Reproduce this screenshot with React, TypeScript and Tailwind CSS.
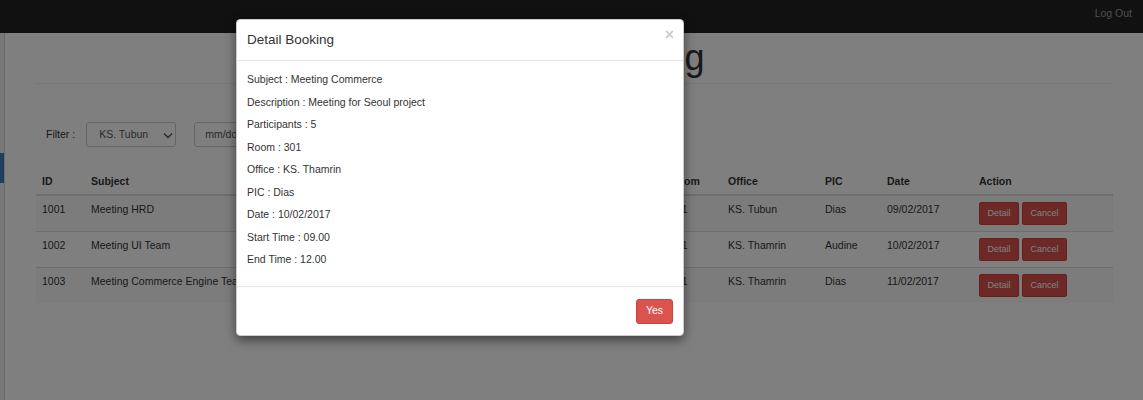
import React from "react";

const rows = [
  { id: "1001", subject: "Meeting HRD", room: "301", office: "KS. Tubun", pic: "Dias", date: "09/02/2017" },
  { id: "1002", subject: "Meeting UI Team", room: "201", office: "KS. Thamrin", pic: "Audine", date: "10/02/2017" },
  { id: "1003", subject: "Meeting Commerce Engine Team", room: "101", office: "KS. Thamrin", pic: "Dias", date: "11/02/2017" },
];

const details = [
  "Subject : Meeting Commerce",
  "Description : Meeting for Seoul project",
  "Participants : 5",
  "Room : 301",
  "Office : KS. Thamrin",
  "PIC : Dias",
  "Date : 10/02/2017",
  "Start Time : 09.00",
  "End Time : 12.00",
];

const cols = "grid grid-cols-[49px_579px_58px_97px_62px_92px_140px]";

export default function App() {
  return (
    <div className="relative w-[1143px] h-[400px] overflow-hidden bg-white text-[#333] text-[10.5px] font-['Liberation_Sans',Arial,sans-serif]">
      {/* navbar */}
      <div className="h-[33px] bg-[#222] flex justify-end">
        <span className="text-[#9d9d9d] pr-[11px] pt-[6px] leading-[15px]">Log Out</span>
      </div>

      <div className="flex h-[367px]">
        {/* sidebar */}
        <div className="w-[5px] bg-[#f0f0f0] border-r border-[#d5d5d5] flex flex-col">
          <div className="h-[120px]" />
          <div className="h-[30px] w-[4px] bg-[#3f7dba]" />
        </div>

        {/* main */}
        <div className="flex-1 pl-[31px] pr-[30px]">
          <div className="mt-[4.5px] pb-[5.5px] border-b border-[#eee]">
            <h1 className="text-[36px] leading-[40px] text-center font-normal pr-[8px]">Meeting Booking</h1>
          </div>

          <div className="mt-[38px] h-[25px] flex items-center">
            <span className="pl-[10px] leading-[15px]">Filter :</span>
            <div className="ml-[11px] w-[90px] h-[25px] border border-[#ccc] rounded-[3px] flex items-center pl-[12px] pr-[3px] relative">
              <span className="text-[10.5px] text-[#555]">KS. Tubun</span>
              <svg className="absolute left-[76px] top-[9px]" width="10" height="7" viewBox="0 0 10 7">
                <path d="M1 1.5 L5 5.5 L9 1.5" fill="none" stroke="#555" strokeWidth="1.4" />
              </svg>
            </div>
            <div className="ml-[18px] w-[160px] h-[25px] border border-[#ccc] rounded-[3px] flex items-center pl-[10px]">
              <span className="text-[#555]">mm/dd/yyyy</span>
            </div>
          </div>

          {/* table */}
          <div className="mt-[20px]">
            <div className={`${cols} h-[29px] border-b-2 border-[#ddd] font-bold leading-[15px]`}>
              {["ID", "Subject", "Room", "Office", "PIC", "Date", "Action"].map((h) => (
                <div key={h} className="px-[6px] pt-[7px]">{h}</div>
              ))}
            </div>
            {rows.map((r, i) => (
              <div
                key={r.id}
                className={`${cols} leading-[15px] ${i > 0 ? "border-t border-[#ddd]" : ""} ${i % 2 === 0 ? "bg-[#f9f9f9]" : "bg-white"}`}
              >
                <div className="px-[6px] py-[6px]">{r.id}</div>
                <div className="px-[6px] py-[6px] whitespace-nowrap">{r.subject}</div>
                <div className="px-[6px] py-[6px]">{r.room}</div>
                <div className="px-[6px] py-[6px]">{r.office}</div>
                <div className="px-[6px] py-[6px]">{r.pic}</div>
                <div className="px-[6px] py-[6px]">{r.date}</div>
                <div className="px-[6px] py-[6px] flex gap-[3px]">
                  <button className="w-[40px] h-[23px] bg-[#d9534f] border border-[#d43f3a] rounded-[2px] text-white text-[9px]">Detail</button>
                  <button className="w-[45px] h-[23px] bg-[#d9534f] border border-[#d43f3a] rounded-[2px] text-white text-[9px]">Cancel</button>
                </div>
              </div>
            ))}
          </div>
        </div>
      </div>

      {/* backdrop */}
      <div className="absolute inset-0 bg-black/50" />

      {/* modal */}
      <div className="absolute left-[236px] top-[19px] w-[448px] bg-white rounded-[4.5px] border border-black/20 shadow-[0_4px_11px_rgba(0,0,0,0.5)]">
        <div className="flex justify-between items-start px-[10px] pt-[10px] pb-[11px] border-b border-[#e5e5e5]">
          <span className="text-[13.5px] leading-[19px] text-[#333]">Detail Booking</span>
          <span className="text-[16px] leading-[19px] font-bold text-black opacity-20 -mt-[5px] -mr-[1px]">×</span>
        </div>
        <div className="px-[10px] pt-[11.25px] pb-[3.75px]">
          {details.map((d) => (
            <p key={d} className="leading-[15px] mb-[7.5px]">{d}</p>
          ))}
          <div className="h-[7.5px]" />
        </div>
        <div className="border-t border-[#e5e5e5] px-[10px] py-[11.5px] flex justify-end">
          <button className="w-[37px] h-[25px] bg-[#d9534f] border border-[#d43f3a] rounded-[3px] text-white text-[10.5px]">Yes</button>
        </div>
      </div>
    </div>
  );
}
